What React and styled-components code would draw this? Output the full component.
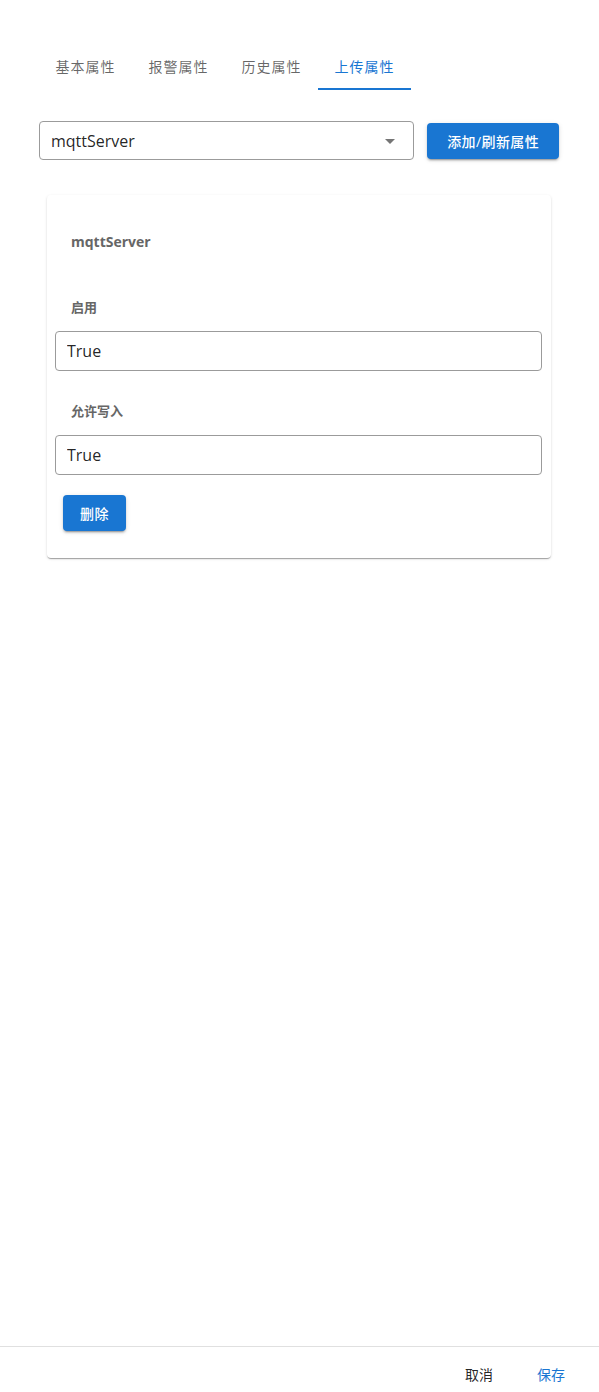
import React, { useState } from "react";
import styled, { createGlobalStyle } from "styled-components";

const GlobalStyle = createGlobalStyle`
  html, body {
    margin: 0;
    padding: 0;
    background: #fff;
  }
  body {
    font-family: "Open Sans", "Noto Sans", "Noto Sans CJK SC", sans-serif;
  }
`;

const Page = styled.div`
  height: 100vh;
  display: flex;
  flex-direction: column;
`;

const Content = styled.div`
  flex: 1;
  padding: 42px 40px 0 39px;
`;

const Tabs = styled.div`
  display: flex;
  height: 48px;
`;

const Tab = styled.div`
  width: 93px;
  height: 48px;
  display: flex;
  align-items: center;
  justify-content: center;
  box-sizing: border-box;
  font-size: 14px;
  letter-spacing: 1px;
  font-weight: 400;
  color: ${({ $active }) => ($active ? "#1976d2" : "rgba(0,0,0,0.6)")};
  border-bottom: 2px solid ${({ $active }) => ($active ? "#1976d2" : "transparent")};
  padding-top: 2px;
  cursor: pointer;
`;

const SelectRow = styled.div`
  display: flex;
  align-items: center;
  gap: 13px;
  margin-top: 31px;
`;

const Select = styled.div`
  position: relative;
  width: 376px;
  height: 39px;
  box-sizing: border-box;
  border: 1px solid #9b9b9b;
  border-radius: 4px;
  display: flex;
  align-items: center;
  padding-left: 11px;
  font-size: 16px;
  color: rgba(0, 0, 0, 0.87);
`;

const Arrow = styled.svg`
  position: absolute;
  right: 11px;
  top: 7px;
  width: 24px;
  height: 24px;
  fill: rgba(0, 0, 0, 0.54);
`;

const Button = styled.button`
  height: 36px;
  padding: 0 16px;
  min-width: 64px;
  border: none;
  border-radius: 4px;
  background: #1976d2;
  color: #fff;
  font-family: inherit;
  font-size: 14px;
  font-weight: 500;
  letter-spacing: 0.4px;
  box-shadow: 0 3px 1px -2px rgba(0,0,0,0.2), 0 2px 2px 0 rgba(0,0,0,0.14), 0 1px 5px 0 rgba(0,0,0,0.12);
  cursor: pointer;
`;

const AddButton = styled(Button)`
  width: 132px;
  padding: 0;
`;

const Card = styled.div`
  margin: 35px 8px 0 8px;
  padding: 37px 9px 27px 8px;
  border-radius: 4px;
  box-shadow: 0 2px 1px -1px rgba(0,0,0,0.2), 0 1px 1px 0 rgba(0,0,0,0.14), 0 1px 3px 0 rgba(0,0,0,0.12);
  display: flex;
  flex-direction: column;
  align-items: flex-start;
`;

const CardTitle = styled.div`
  font-size: 14px;
  line-height: 20px;
  font-weight: 700;
  color: #666;
  padding-left: 16px;
  margin-bottom: 45px;
`;

const Label = styled.div`
  font-size: 13px;
  line-height: 20px;
  font-weight: 700;
  color: #666;
  padding-left: 16px;
  margin-bottom: 14px;
`;

const Input = styled.input`
  width: 100%;
  height: 40px;
  box-sizing: border-box;
  border: 1px solid #9b9b9b;
  border-radius: 4px;
  padding: 0 11px;
  font-family: inherit;
  font-size: 16px;
  color: rgba(0, 0, 0, 0.87);
  outline: none;
  margin-bottom: ${({ $gap }) => $gap}px;
`;

const DeleteButton = styled(Button)`
  margin-left: 8px;
  width: 63px;
  min-width: 0;
  padding: 0;
`;

const Footer = styled.div`
  border-top: 1px solid #e0e0e0;
  display: flex;
  justify-content: flex-end;
  gap: 8px;
  padding: 9px 16px 0;
`;

const TextButton = styled.button`
  height: 36px;
  min-width: 64px;
  padding: 0 8px;
  border: none;
  background: none;
  font-family: inherit;
  font-size: 14px;
  color: ${({ $primary }) => ($primary ? "#1976d2" : "rgba(0,0,0,0.87)")};
  cursor: pointer;
`;

const tabs = ["基本属性", "报警属性", "历史属性", "上传属性"];

const App = () => {
  const [active, setActive] = useState(3);
  return (
    <Page>
      <GlobalStyle />
      <Content>
        <Tabs>
          {tabs.map((t, i) => (
            <Tab key={t} $active={i === active} onClick={() => setActive(i)}>
              {t}
            </Tab>
          ))}
        </Tabs>
        <SelectRow>
          <Select>
            mqttServer
            <Arrow viewBox="0 0 24 24">
              <path d="M7 10l5 5 5-5z" />
            </Arrow>
          </Select>
          <AddButton>添加/刷新属性</AddButton>
        </SelectRow>
        <Card>
          <CardTitle>mqttServer</CardTitle>
          <Label>启用</Label>
          <Input defaultValue="True" $gap={30} />
          <Label>允许写入</Label>
          <Input defaultValue="True" $gap={20} />
          <DeleteButton>删除</DeleteButton>
        </Card>
      </Content>
      <Footer>
        <TextButton>取消</TextButton>
        <TextButton $primary>保存</TextButton>
      </Footer>
    </Page>
  );
};

export default App;
